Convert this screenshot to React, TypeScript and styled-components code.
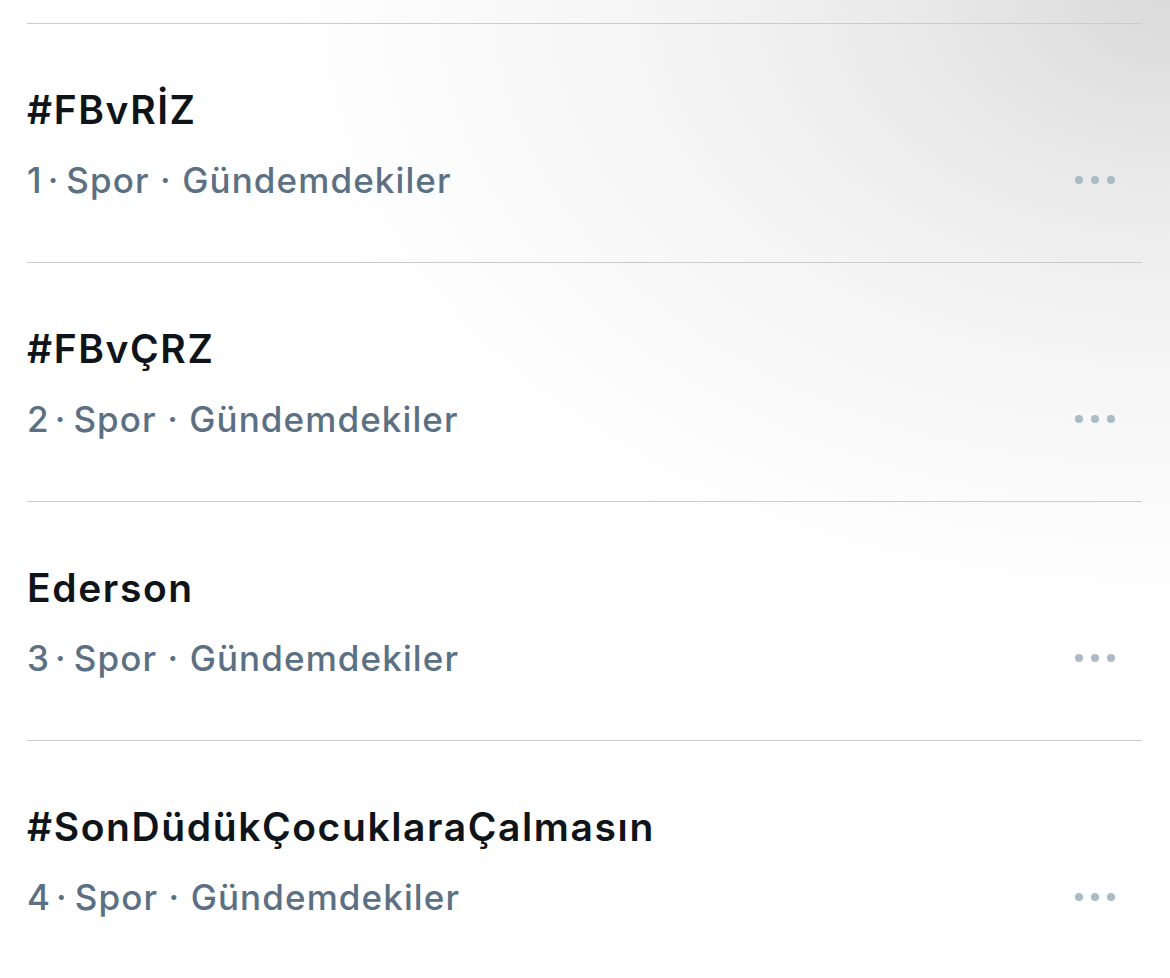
import React from "react";
import styled, { createGlobalStyle } from "styled-components";

const trends = [
  { title: "#FBvRİZ", rank: 1, category: "Spor" },
  { title: "#FBvÇRZ", rank: 2, category: "Spor" },
  { title: "Ederson", rank: 3, category: "Spor" },
  { title: "#SonDüdükÇocuklaraÇalmasın", rank: 4, category: "Spor" },
];

function App() {
  return (
    <>
      <GlobalStyle />
      <Styled_page>
        <Styled_list>
          {trends.map((eachTrend) => (
            <Styled_trendItem key={eachTrend.rank}>
              <Styled_title>{eachTrend.title}</Styled_title>
              <Styled_metaRow>
                <Styled_meta>
                  {eachTrend.rank}
                  <Styled_thinDot>·</Styled_thinDot>
                  {eachTrend.category} · Gündemdekiler
                </Styled_meta>
                <Styled_moreButton aria-label="more">
                  <span />
                  <span />
                  <span />
                </Styled_moreButton>
              </Styled_metaRow>
            </Styled_trendItem>
          ))}
        </Styled_list>
      </Styled_page>
    </>
  );
}

const GlobalStyle = createGlobalStyle`
  html, body {
    margin: 0;
    padding: 0;
    background: #ffffff;
  }
  body {
    font-family: Inter, "Noto Sans", "Liberation Sans", sans-serif;
    -webkit-font-smoothing: antialiased;
  }
`;

const Styled_page = styled.div`
  width: 1170px;
  height: 978px;
  overflow: hidden;
  padding: 23px 28px 0 27px;
  box-sizing: border-box;
  background:
    radial-gradient(ellipse 900px 620px at 100% 0%, #dadada 0%, #e9e9e9 28%, #f5f5f5 58%, rgba(255, 255, 255, 0) 100%),
    #ffffff;
`;

const Styled_list = styled.ul`
  list-style: none;
  margin: 0;
  padding: 0;
`;

const Styled_trendItem = styled.li`
  height: 239px;
  box-sizing: border-box;
  border-top: 1px solid #cbcbcb;
  padding-top: 63px;
`;

const Styled_title = styled.div`
  font-size: 39px;
  line-height: 46px;
  font-weight: 600;
  letter-spacing: 1.6px;
  color: #0f1419;
  margin-bottom: 26px;
`;

const Styled_metaRow = styled.div`
  display: flex;
  align-items: center;
  justify-content: space-between;
  padding-right: 27px;
`;

const Styled_meta = styled.div`
  font-size: 35px;
  line-height: 42px;
  font-weight: 500;
  letter-spacing: 1.1px;
  color: #5b7083;
`;

const Styled_thinDot = styled.span`
  margin: 0 7px 0 5px;
`;

const Styled_moreButton = styled.button`
  display: flex;
  gap: 8px;
  padding: 0;
  border: none;
  background: transparent;

  & > span {
    width: 8px;
    height: 8px;
    border-radius: 50%;
    background: #aabbc5;
  }
`;

export default App;
